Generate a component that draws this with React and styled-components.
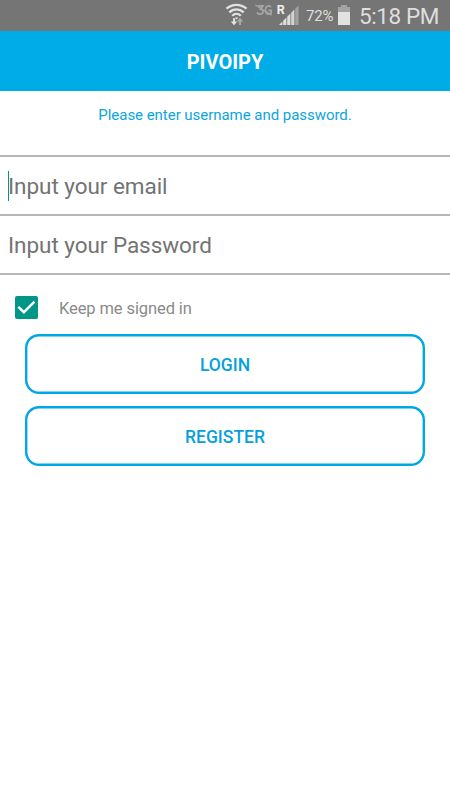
import React, { useState } from "react";
import styled, { createGlobalStyle } from "styled-components";

const GlobalStyle = createGlobalStyle`
  *, *::before, *::after { box-sizing: border-box; }
  html, body { margin: 0; background: #fff; }
  body { font-family: Roboto, sans-serif; }
  input, button { font-family: inherit; }
`;

const Screen = styled.main`
  width: 450px;
  height: 800px;
  overflow: hidden;
  background: #fff;
`;

const StatusBar = styled.div`
  display: flex;
  height: 31px;
  background: #757575;
  color: #dedede;
  padding-left: 225px;
`;

const StatusIcon = styled.svg`
  flex: none;
  display: block;
`;

const Battery = styled.span`
  width: 31px;
  margin-left: 6px;
  font-size: 15px;
  line-height: 33px;
  letter-spacing: -0.15px;
  white-space: nowrap;
`;

const Clock = styled.time`
  margin-left: 8px;
  font-size: 22.5px;
  line-height: 33px;
  letter-spacing: -0.4px;
  white-space: nowrap;
`;

const Header = styled.header`
  display: flex;
  align-items: center;
  justify-content: center;
  height: 60px;
  padding-top: 2px;
  background: #00ace8;
  color: #fff;
`;

const Title = styled.h1`
  margin: 0;
  font-size: 20px;
  line-height: 24px;
  font-weight: 700;
`;

const Hint = styled.p`
  height: 64px;
  margin: 0;
  padding-top: 15px;
  font-size: 15px;
  line-height: 18px;
  letter-spacing: -0.04px;
  text-align: center;
  color: #0ba5e0;
`;

const Fields = styled.div`
  border-top: 2px solid #b7b7b7;
`;

const Field = styled.div`
  display: flex;
  align-items: center;
  height: 59px;
  padding-left: 8px;
  border-bottom: 2px solid #b7b7b7;
`;

const Caret = styled.span`
  width: 1px;
  height: 30px;
  margin-right: -1px;
  background: ${(p) => (p.$active ? "#009682" : "transparent")};
`;

const Input = styled.input`
  flex: 1;
  height: 50px;
  margin: 1px 0 0;
  padding: 0;
  border: 0;
  outline: 0;
  background: transparent;
  font-size: 22.5px;
  letter-spacing: -0.05px;
  color: #333;
  &::placeholder { color: #737373; opacity: 1; }
`;

const Remember = styled.label`
  display: flex;
  align-items: center;
  height: 59px;
  padding: 6px 0 0 15px;
  font-size: 16.5px;
  letter-spacing: -0.1px;
  color: #8a8a8a;
`;

const CheckBox = styled.button`
  width: 23px;
  height: 23px;
  margin-right: 21px;
  padding: 0;
  border: 0;
  border-radius: 2px;
  background: #009688;
`;

const RememberText = styled.span`
  padding-top: 1px;
`;

const Actions = styled.div`
  display: flex;
  flex-direction: column;
  gap: 12px;
  padding: 0 25px;
`;

const ActionButton = styled.button`
  height: 60px;
  padding: 1px 0 0;
  border: 0;
  border-radius: 14px;
  box-shadow: inset 0 0 0 2.4px #00a7e5;
  background: #fff;
  color: #079fdc;
  font-size: 17.5px;
  font-weight: 500;
`;

function WifiIcon() {
  return (
    <StatusIcon width="28" height="31" viewBox="0 0 28 31" fill="none">
      <g stroke="#e2e2e2" strokeWidth="2.3">
        <path d="M1.5 8.7C7.5 3.5 15.5 3.5 21.5 8.7" />
        <path d="M4.3 12.3C8.5 8.4 14.5 8.4 18.7 12.3" />
        <path d="M7.2 15.8C9.8 13.2 13.2 13.2 15.8 15.8" />
      </g>
      <path d="M9.9 17.9Q11.5 16.6 13.1 17.9L11.5 19.4Z" fill="#e2e2e2" />
      <path d="M8 18.3H10V21.6H12.3L9 25.3L5.7 21.6H8Z" fill="#e2e2e2" />
      <path d="M14 25V21.4H11.7L15 17.7L18.3 21.4H16V25Z" fill="#a9a9a9" />
    </StatusIcon>
  );
}

function MobileDataIcon() {
  return (
    <StatusIcon width="22" height="31" viewBox="0 0 22 31" fill="none" stroke="#a6a6a6" strokeWidth="1.7">
      <path d="M5 5.8H10L7.4 9.1C11.4 9.4 10.5 14.3 6.7 14.1C5.4 14 4.5 13.4 4 12.5" />
      <path d="M18 7C15.2 4.7 12.4 6.2 12.4 10C12.4 14.5 16 15 18.2 12.8V10.3H15.5" />
      <path d="M2.3 5L19 15.3" strokeWidth="1.3" />
    </StatusIcon>
  );
}

function SignalIcon() {
  return (
    <StatusIcon width="25" height="31" viewBox="0 0 25 31">
      <text x="1.8" y="14" fontFamily="Roboto, sans-serif" fontWeight="700" fontSize="12.5" fill="#eee">R</text>
      <path d="M4 25H7.4V21.5L4 25ZM8.2 25H11.4V17.5L8.2 20.7ZM12.2 25H15.4V13.5L12.2 16.7Z" fill="#dedede" />
      <path d="M16.2 25H19.4V9.5L16.2 12.7Z" fill="#d4d4d4" />
      <path d="M20.2 25H23.6V5.3L20.2 8.7Z" fill="#a0a0a0" />
    </StatusIcon>
  );
}

function BatteryIcon() {
  return (
    <StatusIcon width="14" height="31" viewBox="0 0 14 31">
      <path d="M4 5H10V7H13V12H1V7H4Z" fill="#a3a3a3" />
      <path d="M1 12H13V25H1Z" fill="#e2e2e2" />
    </StatusIcon>
  );
}

function CheckIcon() {
  return (
    <StatusIcon width="23" height="23" viewBox="0 0 23 23" fill="none">
      <path d="M3.3 10.8L8.9 16.2L19.5 5.6" stroke="#fff" strokeWidth="2.4" />
    </StatusIcon>
  );
}

export default function App() {
  const [focused, setFocused] = useState("email");
  const [remember, setRemember] = useState(true);
  return (
    <>
      <GlobalStyle />
      <Screen>
        <StatusBar>
          <WifiIcon />
          <MobileDataIcon />
          <SignalIcon />
          <Battery>72%</Battery>
          <BatteryIcon />
          <Clock>5:18 PM</Clock>
        </StatusBar>
        <Header><Title>PIVOIPY</Title></Header>
        <Hint>Please enter username and password.</Hint>
        <Fields>
          <Field>
            <Caret $active={focused === "email"} />
            <Input type="email" placeholder="Input your email" onFocus={() => setFocused("email")} />
          </Field>
          <Field>
            <Caret $active={focused === "password"} />
            <Input type="password" placeholder="Input your Password" onFocus={() => setFocused("password")} />
          </Field>
        </Fields>
        <Remember>
          <CheckBox type="button" role="checkbox" aria-checked={remember} onClick={() => setRemember(!remember)}>
            {remember && <CheckIcon />}
          </CheckBox>
          <RememberText>Keep me signed in</RememberText>
        </Remember>
        <Actions>
          <ActionButton type="button">LOGIN</ActionButton>
          <ActionButton type="button">REGISTER</ActionButton>
        </Actions>
      </Screen>
    </>
  );
}
